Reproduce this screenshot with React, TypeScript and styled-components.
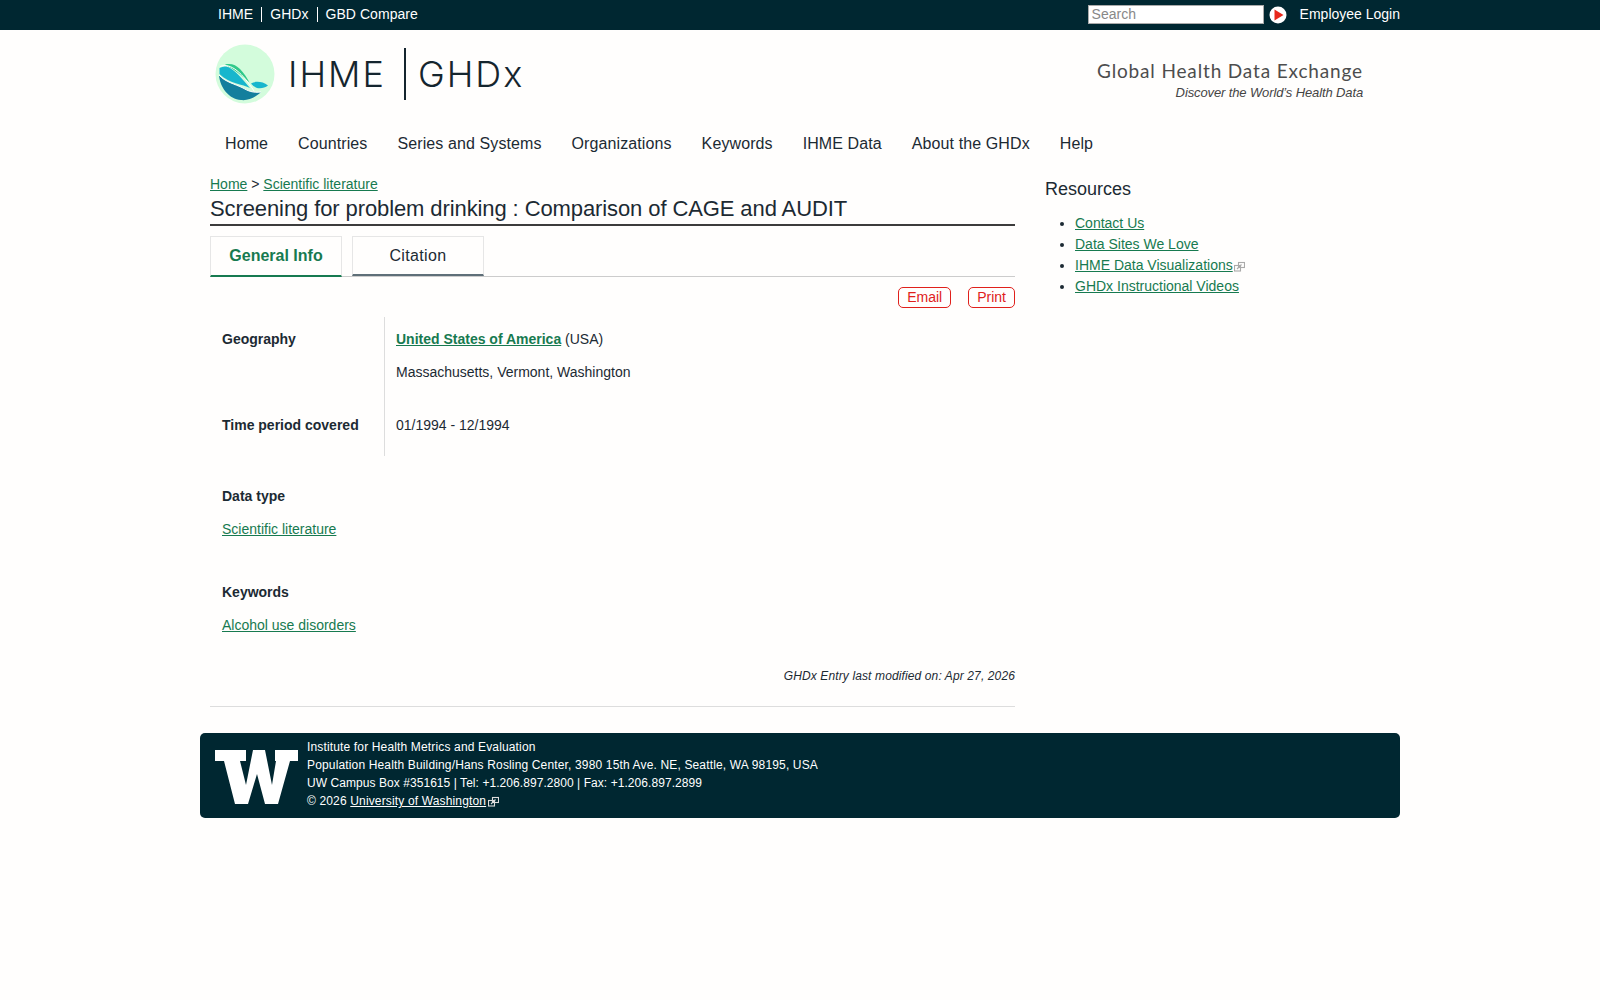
import React from "react";
import styled, { createGlobalStyle } from "styled-components";

const GlobalStyle = createGlobalStyle`
  html, body {
    margin: 0;
    padding: 0;
    background: #fffefd;
    font-family: "Liberation Sans", Arial, sans-serif;
    color: #1c2a33;
  }
  a { color: #177a50; }
`;

const TopBar = styled.div`
  background: #002731;
  height: 30px;
`;

const TopInner = styled.div`
  width: 1200px;
  margin: 0 auto;
  height: 30px;
  display: flex;
  align-items: center;
  justify-content: space-between;
`;

const TopLinks = styled.div`
  display: flex;
  padding-left: 10px;
  margin-top: -1px;
`;

const TopLink = styled.a`
  color: #fff;
  font-size: 14px;
  line-height: 15px;
  letter-spacing: 0.05px;
  padding: 0 8px;
  border-left: 1px solid #fff;
  &:first-child {
    border-left: 0;
  }
`;

const TopRight = styled.div`
  display: flex;
  align-items: center;
  margin-top: -1px;
`;

const SearchBox = styled.input`
  box-sizing: border-box;
  width: 176px;
  height: 19px;
  border: 1px solid #aaa;
  padding: 0 3px 2px;
  font: 14px "Liberation Sans", Arial, sans-serif;
  background: #fff;
  &::placeholder {
    color: #888;
  }
`;

const GoButton = styled.svg`
  width: 18px;
  height: 18px;
  margin: 0 13px 0 5px;
`;

const LoginLink = styled.a`
  color: #fff;
  font-size: 14px;
  margin-top: -2px;
`;

const Masthead = styled.div`
  width: 1180px;
  margin: 0 auto;
  padding-right: 20px;
  height: 93px;
  display: flex;
  align-items: center;
  justify-content: space-between;
`;

const Brand = styled.div`
  display: flex;
  align-items: center;
  padding-left: 15px;
  margin-top: -5px;
`;

const BrandMark = styled.svg`
  width: 60px;
  height: 60px;
  margin-right: 13px;
`;

const BrandWord = styled.span`
  font-family: Inter, "Liberation Sans", sans-serif;
  font-weight: 300;
  font-size: 36px;
  letter-spacing: 2px;
  color: #15252e;
`;

const BrandDivider = styled.span`
  width: 2px;
  height: 52px;
  background: #15252e;
  margin: 0 12px 0 18px;
`;

const Tagline = styled.div`
  text-align: right;
  margin-right: 17px;
  margin-top: 8px;
`;

const TaglineTitle = styled.div`
  font-family: Lato, sans-serif;
  font-size: 19px;
  letter-spacing: 0.85px;
  color: #4d4d4d;
  line-height: 24px;
`;

const TaglineSub = styled.div`
  font-size: 13px;
  font-style: italic;
  letter-spacing: -0.12px;
  color: #444;
  line-height: 20px;
`;

const Nav = styled.nav`
  width: 1190px;
  margin: -1px auto 0;
  padding-left: 20px;
  box-sizing: border-box;
  display: flex;
  gap: 30px;
  height: 44px;
  align-items: center;
`;

const NavItem = styled.a`
  font-size: 16px;
  letter-spacing: 0.1px;
  color: #1c2a33;
`;

const Columns = styled.div`
  width: 1190px;
  margin: 8px 0 0 210px;
  display: flex;
`;

const Main = styled.main`
  width: 805px;
`;

const Crumbs = styled.div`
  font-size: 14px;
  line-height: 20px;
`;

const Title = styled.h1`
  margin: 0;
  font-size: 22px;
  font-weight: 400;
  letter-spacing: -0.1px;
  line-height: 29px;
  border-bottom: 2px solid #3c3c3c;
  height: 30px;
`;

const Tabs = styled.div`
  display: flex;
  gap: 10px;
  margin-top: 10px;
  height: 40px;
  border-bottom: 1px solid #ccc;
`;

const Tab = styled.div<{ $active?: boolean }>`
  box-sizing: border-box;
  width: 132px;
  height: ${(p) => (p.$active ? "41px" : "40px")};
  text-align: center;
  line-height: 38px;
  font-size: 16px;
  letter-spacing: ${(p) => (p.$active ? "0" : "0.35px")};
  border: 1px solid #e6e6e6;
  border-bottom: 2px solid ${(p) => (p.$active ? "#177a50" : "#5f6f78")};
  font-weight: ${(p) => (p.$active ? 700 : 400)};
  color: ${(p) => (p.$active ? "#177a50" : "#1c2a33")};
`;

const Actions = styled.div`
  display: flex;
  justify-content: flex-end;
  gap: 17px;
  margin-top: 10px;
`;

const ActionButton = styled.a`
  font-size: 14px;
  line-height: 19px;
  color: #e0201b;
  border: 1px solid #e0201b;
  border-radius: 5px;
  padding: 0 8px;
`;

const InfoTable = styled.div`
  display: grid;
  grid-template-columns: 174px 1fr;
  margin-top: 9px;
`;

const Label = styled.div`
  font-size: 14px;
  font-weight: 700;
  padding: 14px 12px 23px;
  line-height: 16px;
`;

const Value = styled.div`
  font-size: 14px;
  line-height: 16px;
  padding: 14px 11px 23px;
  border-left: 1px solid #ddd;
`;

const ValueLine = styled.div`
  margin-bottom: 17px;
  &:last-child {
    margin-bottom: 0;
  }
`;

const Block = styled.section`
  font-size: 14px;
  line-height: 16px;
  padding: 32px 12px 15px;
`;

const BlockTitle = styled.div`
  font-weight: 700;
  margin-bottom: 17px;
`;

const Modified = styled.div`
  font-size: 12px;
  font-style: italic;
  letter-spacing: 0.12px;
  text-align: right;
  margin-top: 20px;
  line-height: 16px;
`;

const Rule = styled.hr`
  border: 0;
  border-top: 1px solid #ddd;
  margin: 22px 0 0;
`;

const Side = styled.aside`
  margin-left: 30px;
`;

const SideTitle = styled.h2`
  margin: 4px 0 0;
  font-size: 18px;
  font-weight: 400;
  line-height: 22px;
`;

const SideList = styled.ul`
  margin: 13px 0 0;
  padding-left: 30px;
  font-size: 14px;
  line-height: 21px;
`;

const ExternalIcon = styled.svg<{ $gap: number }>`
  width: 11px;
  height: 11px;
  margin-left: ${(p) => p.$gap}px;
  vertical-align: -2px;
`;

const Footer = styled.footer`
  width: 1200px;
  height: 85px;
  margin: 26px auto 0;
  background: #002731;
  border-radius: 5px;
  display: flex;
  align-items: center;
  color: #fff;
  font-size: 12px;
  line-height: 18px;
  letter-spacing: 0.15px;
`;

const FooterMark = styled.svg`
  width: 83px;
  height: 54px;
  margin: 3px 9px 0 15px;
`;

const FooterText = styled.div`
  margin-top: -3px;
`;

const FooterLink = styled.a`
  color: #fff;
`;

const PhoneLine = styled.div`
  letter-spacing: 0.06px;
`;

const External = ({ color, gap }: { color: string; gap: number }) => (
  <ExternalIcon $gap={gap} viewBox="0 0 11 11" fill="none" stroke={color} strokeWidth="1.1">
    <rect x="4.5" y="1.5" width="6" height="5" />
    <rect x="0.5" y="4.5" width="6" height="5.5" />
    <path d="M3 8l4.5-4.5" />
  </ExternalIcon>
);

const App = () => {
  return (
    <>
      <GlobalStyle />
      <TopBar>
        <TopInner>
          <TopLinks>
            <TopLink>IHME</TopLink>
            <TopLink>GHDx</TopLink>
            <TopLink>GBD Compare</TopLink>
          </TopLinks>
          <TopRight>
            <SearchBox placeholder="Search" />
            <GoButton viewBox="0 0 18 18">
              <circle cx="9" cy="9" r="8.5" fill="#fff" />
              <path d="M5.5 3.5L14.5 9L5.5 14.5Z" fill="#e8281c" />
            </GoButton>
            <LoginLink>Employee Login</LoginLink>
          </TopRight>
        </TopInner>
      </TopBar>
      <Masthead>
        <Brand>
          <BrandMark viewBox="0 0 60 60">
            <circle cx="30" cy="30" r="29.5" fill="#d3fcdc" />
            <path d="M4 31C10 38 20 40 28 44C33 47 38 49 46 48C41 53 33 57 26 56C14 55 5 44 4 31Z" fill="#137f9d" />
            <path d="M4.5 24C8 22 12 22 15 24C22 28 28 36 35 44C28 40 14 40 4.5 30Z" fill="#17b6cd" />
            <path d="M10 20.5C16 19 21 21 25 25C29 29 32 34 34.5 38.5C27 32 19 25 10 20.5Z" fill="#30c98a" />
            <path d="M36 39.5C40 37 47 37 53 41.5C48 45 41 46 36 39.5Z" fill="#17b6cd" />
            <path d="M4 31C10 38 20 40 28 44C33 47 38 49 46 48" fill="none" stroke="#fff" strokeWidth="1" />
            <path d="M5 22.5C16 18 28 30 39 47" fill="none" stroke="#fff" strokeWidth="1" />
          </BrandMark>
          <BrandWord>IHME</BrandWord>
          <BrandDivider />
          <BrandWord>GHDx</BrandWord>
        </Brand>
        <Tagline>
          <TaglineTitle>Global Health Data Exchange</TaglineTitle>
          <TaglineSub>Discover the World’s Health Data</TaglineSub>
        </Tagline>
      </Masthead>
      <Nav>
        <NavItem>Home</NavItem>
        <NavItem>Countries</NavItem>
        <NavItem>Series and Systems</NavItem>
        <NavItem>Organizations</NavItem>
        <NavItem>Keywords</NavItem>
        <NavItem>IHME Data</NavItem>
        <NavItem>About the GHDx</NavItem>
        <NavItem>Help</NavItem>
      </Nav>
      <Columns>
        <Main>
          <Crumbs>
            <a href="#">Home</a> &gt; <a href="#">Scientific literature</a>
          </Crumbs>
          <Title>Screening for problem drinking : Comparison of CAGE and AUDIT</Title>
          <Tabs>
            <Tab $active>General Info</Tab>
            <Tab>Citation</Tab>
          </Tabs>
          <Actions>
            <ActionButton>Email</ActionButton>
            <ActionButton>Print</ActionButton>
          </Actions>
          <InfoTable>
            <Label>Geography</Label>
            <Value>
              <ValueLine>
                <a href="#"><b>United States of America</b></a> (USA)
              </ValueLine>
              <ValueLine>Massachusetts, Vermont, Washington</ValueLine>
            </Value>
            <Label>Time period covered</Label>
            <Value>01/1994 - 12/1994</Value>
          </InfoTable>
          <Block>
            <BlockTitle>Data type</BlockTitle>
            <a href="#">Scientific literature</a>
          </Block>
          <Block>
            <BlockTitle>Keywords</BlockTitle>
            <a href="#">Alcohol use disorders</a>
          </Block>
          <Modified>GHDx Entry last modified on: Apr 27, 2026</Modified>
          <Rule />
        </Main>
        <Side>
          <SideTitle>Resources</SideTitle>
          <SideList>
            <li><a href="#">Contact Us</a></li>
            <li><a href="#">Data Sites We Love</a></li>
            <li><a href="#">IHME Data Visualizations</a><External color="#aaa" gap={1} /></li>
            <li><a href="#">GHDx Instructional Videos</a></li>
          </SideList>
        </Side>
      </Columns>
      <Footer>
        <FooterMark viewBox="0 0 83 54">
          <path d="M0 0H31V11H25L31 35L38 0H50L57 35L61 11H60V0H83V11H75L63 54H50L42 24L33 54H20L9 11H0Z" fill="#fff" />
        </FooterMark>
        <FooterText>
          <div>Institute for Health Metrics and Evaluation</div>
          <div>Population Health Building/Hans Rosling Center, 3980 15th Ave. NE, Seattle, WA 98195, USA</div>
          <PhoneLine>UW Campus Box #351615 | Tel: +1.206.897.2800 | Fax: +1.206.897.2899</PhoneLine>
          <div>
            © 2026 <FooterLink href="#">University of Washington</FooterLink>
            <External color="#ddd" gap={2} />
          </div>
        </FooterText>
      </Footer>
    </>
  );
};

export default App;
